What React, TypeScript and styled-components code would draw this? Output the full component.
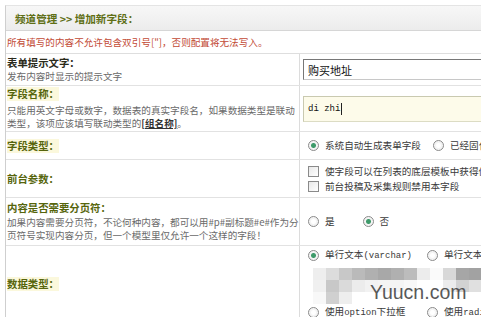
import React from 'react';
import styled, { createGlobalStyle } from 'styled-components';

const Global = createGlobalStyle`
  html, body {
    margin: 0;
    padding: 0;
    background: #fff;
    overflow: hidden;
  }
  body {
    font-family: "Noto Sans CJK SC", "Noto Sans", sans-serif;
    font-size: 9.6px;
    color: #333;
  }
`;

const Table = styled.div`
  margin: 5px 0 0 5px;
  width: 476px;
  overflow: hidden;
  border-left: 1px solid #cfcfcf;
  border-top: 1px solid #e4e4e4;
`;

const Header = styled.div`
  height: 24px;
  display: flex;
  align-items: center;
  padding-left: 9px;
  background: linear-gradient(#f7f7f7, #ececec);
  border-bottom: 1px solid #d6d6d6;
  font-size: 10.6px;
  font-weight: bold;
  color: #5f6f16;
  white-space: pre;
`;

const Notice = styled.div`
  height: 22px;
  display: flex;
  align-items: center;
  padding-left: 1px;
  border-bottom: 1px solid #dedede;
  color: #c24a35;
`;

const Row = styled.div<{ $h: number }>`
  display: grid;
  grid-template-columns: 294px 1fr;
  height: ${(p) => p.$h}px;
  box-sizing: border-box;
  border-bottom: 1px solid #e2e2e2;
`;

const LeftCell = styled.div`
  display: flex;
  flex-direction: column;
  justify-content: center;
  padding-left: 1px;
  border-right: 1px solid #dcdcdc;
  line-height: 13px;
`;

const RightCell = styled.div`
  display: flex;
  flex-direction: column;
  justify-content: center;
  padding-left: 2px;
  position: relative;
  min-width: 0;
  overflow: hidden;
`;

const Label = styled.div<{ $hl?: boolean; $dark?: boolean; $gap?: number }>`
  align-self: flex-start;
  font-weight: bold;
  font-size: 10.4px;
  line-height: 14px;
  margin-bottom: ${(p) => p.$gap ?? 0}px;
  color: ${(p) => (p.$dark ? '#2a2a1a' : '#56650c')};
  background: ${(p) => (p.$hl ? '#fbf8dc' : 'transparent')};
`;

const Desc = styled.div`
  color: #6a6a6a;
  white-space: nowrap;
`;

const Link = styled.span`
  color: #333;
  font-weight: bold;
  text-decoration: underline;
`;

const TextBox = styled.div<{ $soft?: boolean }>`
  height: ${(p) => (p.$soft ? 26 : 21)}px;
  box-sizing: border-box;
  display: flex;
  align-items: center;
  padding-left: 4px;
  margin-left: 1px;
  background: ${(p) => (p.$soft ? '#fdfbea' : '#fff')};
  border: 1px solid ${(p) => (p.$soft ? '#dcdcc4' : '#c8c8c8')};
  border-top-color: ${(p) => (p.$soft ? '#c9c9b0' : '#777')};
  border-left-color: ${(p) => (p.$soft ? '#c9c9b0' : '#777')};
  border-right: none;
  font-size: 11px;
  color: #111;
`;

const Mono = styled.span`
  font-family: "Liberation Mono", "DejaVu Sans Mono", monospace;
  font-size: 9px;
`;

const Caret = styled.span`
  display: inline-block;
  width: 1px;
  height: 12px;
  margin-left: 1px;
  background: #222;
`;

const Options = styled.div<{ $gap?: number }>`
  display: flex;
  align-items: center;
  gap: ${(p) => p.$gap ?? 10}px;
  padding-left: 6px;
  white-space: nowrap;
`;

const OptionGrid = styled.div`
  display: grid;
  grid-template-columns: 119px 1fr;
  padding-left: 6px;
  white-space: nowrap;
`;

const Choice = styled.label`
  display: inline-flex;
  align-items: center;
  gap: 6px;
  color: #3a3a3a;
  line-height: 13px;
`;

const Radio = styled.span<{ $on?: boolean }>`
  width: 9px;
  height: 9px;
  border-radius: 50%;
  border: 1px solid #8a8a8a;
  background: radial-gradient(circle, ${(p) => (p.$on ? '#3e9a6a 0 2px' : '#fff 0 2px')}, #f4f4f4 3px);
  flex: none;
`;

const Check = styled.span`
  width: 9px;
  height: 9px;
  border: 1px solid #8a8a8a;
  background: linear-gradient(135deg, #e8e8e8, #fff);
  flex: none;
`;

const Stack = styled.div`
  display: flex;
  flex-direction: column;
  gap: 2px;
  padding-left: 6px;
  white-space: nowrap;
`;

const Mosaic = styled.div`
  display: grid;
  grid-template-columns: repeat(14, 13px);
  grid-auto-rows: 12px;
  margin: 5px 0 1px -2px;
`;

const Cell = styled.div<{ $c: string }>`
  background: ${(p) => p.$c};
`;

const Watermark = styled.div`
  position: absolute;
  left: 70px;
  top: 35px;
  line-height: 22px;
  font-family: "Liberation Sans", Arial, sans-serif;
  font-size: 19.5px;
  color: #3c3c3c;
  opacity: 0.85;
`;

const mosaic = [
  ['#fff', '#eeeeee', '#dcdcdc', '#c8c8c8', '#bababa', '#b0b0b0', '#a8a8a8', '#b0b0b0', '#bcbcbc', '#ececec', '#fafafa', '#d8d8d8', '#a6a6a6', '#a2a2a2'],
  ['#fff', '#f0f0f0', '#c8c8c8', '#dadada', '#ececec', '#f2f2f2', '#f4f4f4', '#f4f4f4', '#f8f8f8', '#fff', '#fff', '#ececec', '#d2d2d2', '#e0e0e0'],
  ['#fff', '#f8f8f8', '#d0d0d0', '#eeeeee', '#fff', '#fff', '#fff', '#fff', '#fff', '#fff', '#fff', '#fff', '#fff', '#fff'],
];

export default function App() {
  return (
    <>
      <Global />
      <Table>
        <Header>频道管理 &gt;&gt; 增加新字段：</Header>
        <Notice>所有填写的内容不允许包含双引号["]，否则配置将无法写入。</Notice>

        <Row $h={32}>
          <LeftCell>
            <Label $dark>表单提示文字：</Label>
            <Desc>发布内容时显示的提示文字</Desc>
          </LeftCell>
          <RightCell>
            <TextBox>购买地址</TextBox>
          </RightCell>
        </Row>

        <Row $h={46}>
          <LeftCell>
            <Label $hl $gap={3}>字段名称：</Label>
            <Desc>只能用英文字母或数字，数据表的真实字段名，如果数据类型是联动</Desc>
            <Desc>
              类型，该项应该填写联动类型的<Link>[组名称]</Link>。
            </Desc>
          </LeftCell>
          <RightCell>
            <TextBox $soft>
              <Mono>di zhi</Mono>
              <Caret />
            </TextBox>
          </RightCell>
        </Row>

        <Row $h={28}>
          <LeftCell>
            <Label $hl>字段类型：</Label>
          </LeftCell>
          <RightCell>
            <Options $gap={12}>
              <Choice>
                <Radio $on />
                系统自动生成表单字段
              </Choice>
              <Choice>
                <Radio />
                已经固化的表单字段
              </Choice>
            </Options>
          </RightCell>
        </Row>

        <Row $h={38}>
          <LeftCell>
            <Label>前台参数：</Label>
          </LeftCell>
          <RightCell>
            <Stack>
              <Choice>
                <Check />
                使字段可以在列表的底层模板中获得值
              </Choice>
              <Choice>
                <Check />
                前台投稿及采集规则禁用本字段
              </Choice>
            </Stack>
          </RightCell>
        </Row>

        <Row $h={48}>
          <LeftCell>
            <Label $gap={1}>内容是否需要分页符：</Label>
            <Desc>加果内容需要分页符，不论何种内容，都可以用#p#副标题#e#作为分</Desc>
            <Desc>页符号实现内容分页，但一个模型里仅允许一个这样的字段！</Desc>
          </LeftCell>
          <RightCell>
            <Options $gap={28}>
              <Choice>
                <Radio />是
              </Choice>
              <Choice>
                <Radio $on />否
              </Choice>
            </Options>
          </RightCell>
        </Row>

        <Row $h={76}>
          <LeftCell>
            <Label $hl>数据类型：</Label>
          </LeftCell>
          <RightCell>
            <OptionGrid>
              <Choice>
                <Radio $on />
                <span>
                  单行文本<Mono>(varchar)</Mono>
                </span>
              </Choice>
              <Choice>
                <Radio />
                <span>
                  单行文本<Mono>(char)</Mono>
                </span>
              </Choice>
            </OptionGrid>
            <Mosaic>
              {mosaic.flat().map((c, i) => (
                <Cell key={i} $c={c} />
              ))}
            </Mosaic>
            <OptionGrid>
              <Choice>
                <Radio />
                <span>
                  使用<Mono>option</Mono>下拉框
                </span>
              </Choice>
              <Choice>
                <Radio />
                <span>
                  使用<Mono>radio</Mono>选项卡
                </span>
              </Choice>
            </OptionGrid>
            <Watermark>Yuucn.com</Watermark>
          </RightCell>
        </Row>
      </Table>
    </>
  );
}
